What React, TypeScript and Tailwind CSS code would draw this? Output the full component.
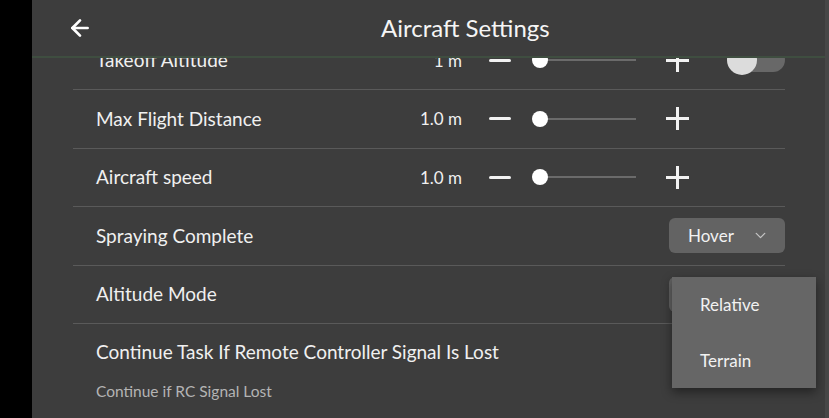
import React from 'react';
import { ArrowLeft, ChevronDown } from 'lucide-react';

const font = { fontFamily: 'Lato, "Noto Sans", sans-serif' };

const Minus = () => <div className="w-[22px] h-[3px] bg-[#f2f2f2] rounded-sm" />;

const Plus = () => (
  <div className="relative w-[23px] h-[23px]">
    <div className="absolute left-0 top-[10px] w-[23px] h-[3px] bg-[#f2f2f2]" />
    <div className="absolute top-0 left-[10px] h-[23px] w-[3px] bg-[#f2f2f2]" />
  </div>
);

const Slider = () => (
  <div className="relative w-[104px] h-[16px] flex items-center">
    <div className="ml-[8px] flex-1 h-[2px] bg-[#6b6b6b]" />
    <div className="absolute left-0 top-0 w-[16px] h-[16px] rounded-full bg-white" />
  </div>
);

const Toggle = () => (
  <div className="relative w-[57px] h-[24px] rounded-full bg-[#686868]">
    <div className="absolute -left-[1px] -top-[3px] w-[30px] h-[30px] rounded-full bg-[#dcdcdc]" />
  </div>
);

const SliderRow: React.FC<{ label: string; value: string; toggle?: boolean }> = ({ label, value, toggle }) => (
  <div className="h-[58.5px] border-b border-[#5a5a5a] flex items-center pl-[23px]">
    <div className="flex-1 text-[19px] text-[#f0f0f0]">{label}</div>
    <div className="text-[17px] text-[#f0f0f0]">{value}</div>
    <div className="ml-[27px]"><Minus /></div>
    <div className="ml-[21px]"><Slider /></div>
    <div className="ml-[30px]"><Plus /></div>
    <div className="ml-[39px] w-[57px]">{toggle && <Toggle />}</div>
  </div>
);

const Select: React.FC<{ value: string }> = ({ value }) => (
  <div className="w-[116px] h-[35px] rounded-md bg-[#636363] flex items-center pl-[19px] pr-[16px]">
    <span className="flex-1 text-[17px] text-[#f2f2f2]">{value}</span>
    <ChevronDown size={17} strokeWidth={1.8} className="text-[#c4c4c4]" />
  </div>
);

const SelectRow: React.FC<{ label: string; value: string }> = ({ label, value }) => (
  <div className="h-[58.5px] border-b border-[#5a5a5a] flex items-center pl-[23px]">
    <div className="flex-1 text-[19px] text-[#f0f0f0]">{label}</div>
    <Select value={value} />
  </div>
);

export default function App() {
  return (
    <div className="w-[829px] h-[418px] flex bg-black overflow-hidden" style={font}>
      <div className="w-[32px] bg-black" />
      <div className="flex-1 relative flex flex-col bg-[#3d3d3d] border-r-4 border-[#474747]">
        <div className="h-[56px] flex items-center px-[35px]">
          <ArrowLeft size={26} strokeWidth={2.5} className="text-white" />
          <div className="ml-[288px] text-[24px] text-[#f5f5f5]">Aircraft Settings</div>
        </div>
        <div className="h-[2px] bg-[#3f4e40]" />
        <div className="flex-1 overflow-hidden">
          <div className="-mt-[26.5px] ml-[41px] w-[712px]">
            <SliderRow label="Takeoff Altitude" value="1 m" toggle />
            <SliderRow label="Max Flight Distance" value="1.0 m" />
            <SliderRow label="Aircraft speed" value="1.0 m" />
            <SelectRow label="Spraying Complete" value="Hover" />
            <SelectRow label="Altitude Mode" value="Relative" />
            <div className="pl-[23px] pt-[14px]">
              <div className="text-[19px] text-[#f0f0f0]">Continue Task If Remote Controller Signal Is Lost</div>
              <div className="mt-[13px] text-[15.5px] text-[#b4b4b4]">Continue if RC Signal Lost</div>
            </div>
          </div>
        </div>
        <div className="absolute left-[640px] top-[277px] w-[144px] h-[111px] bg-[#666666] shadow-[0_4px_10px_rgba(0,0,0,0.45)] flex flex-col pl-[28px] text-[17px] text-[#f2f2f2]">
          <div className="h-[56px] flex items-center">Relative</div>
          <div className="h-[55px] flex items-center">Terrain</div>
        </div>
      </div>
    </div>
  );
}
